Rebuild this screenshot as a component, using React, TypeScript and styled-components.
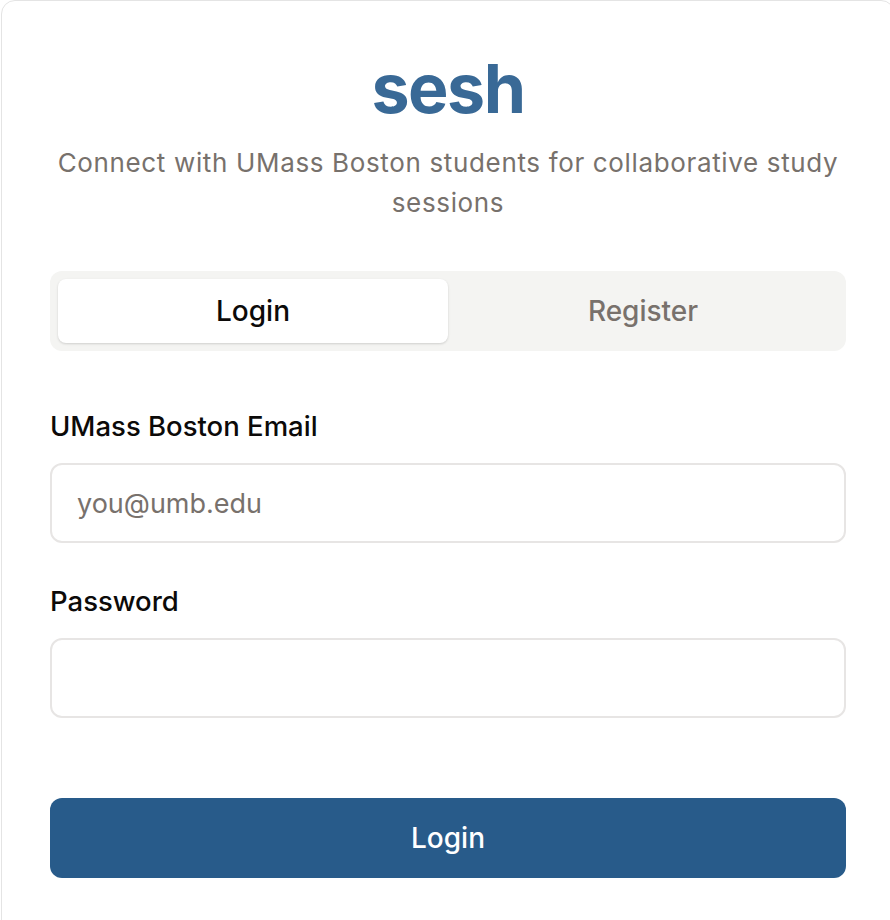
import React from "react";
import styled, { createGlobalStyle } from "styled-components";

const Global = createGlobalStyle`
  html, body { margin: 0; padding: 0; background: #ffffff; overflow: hidden; }
  body { font-family: Inter, "Noto Sans", sans-serif; }
  * { box-sizing: border-box; }
`;

const Page = styled.div`
  width: 890px;
  height: 920px;
  overflow: hidden;
  padding-left: 1px;
`;

const Card = styled.div`
  width: 894px;
  min-height: 940px;
  border: 1px solid #e4e4e4;
  border-radius: 14px;
  background: #fff;
  padding: 51px 48px 40px 48px;
  display: flex;
  flex-direction: column;
`;

const Brand = styled.h1`
  margin: 0;
  text-align: center;
  font-size: 68px;
  line-height: 72px;
  font-weight: 700;
  letter-spacing: -1.5px;
  color: #396996;
`;

const Tagline = styled.p`
  margin: 19px auto 0 auto;
  max-width: 790px;
  text-align: center;
  font-size: 26px;
  line-height: 40px;
  letter-spacing: 0.65px;
  color: #77716c;
`;

const Tabs = styled.div`
  margin-top: 48px;
  height: 80px;
  background: #f4f4f2;
  border-radius: 12px;
  padding: 8px;
  display: grid;
  grid-template-columns: 1fr 1fr;
`;

const Tab = styled.button<{ $active?: boolean }>`
  border: none;
  border-radius: 8px;
  font-family: inherit;
  font-size: 28px;
  font-weight: 500;
  color: ${(p) => (p.$active ? "#0c0a09" : "#78716c")};
  background: ${(p) => (p.$active ? "#ffffff" : "transparent")};
  box-shadow: ${(p) => (p.$active ? "0 1px 3px rgba(0,0,0,0.1), 0 1px 2px rgba(0,0,0,0.06)" : "none")};
`;

const Form = styled.form`
  margin-top: 58px;
  display: flex;
  flex-direction: column;
`;

const Field = styled.div`
  display: flex;
  flex-direction: column;
  gap: 20px;
  margin-bottom: 41px;
`;

const Label = styled.label`
  font-size: 27.5px;
  line-height: 34px;
  font-weight: 500;
  color: #0c0a09;
`;

const Input = styled.input`
  height: 80px;
  flex: 0 0 80px;
  border: 2px solid #e7e5e4;
  border-radius: 12px;
  padding: 0 25px;
  font-family: inherit;
  font-size: 27px;
  color: #0c0a09;
  outline: none;
  &::placeholder { color: #78716c; }
`;

const Submit = styled.button`
  margin-top: 39px;
  height: 80px;
  border: none;
  border-radius: 12px;
  background: #285b8a;
  color: #fff;
  font-family: inherit;
  font-size: 28px;
  font-weight: 500;
`;

export default function App() {
  return (
    <Page>
      <Global />
      <Card>
        <Brand>sesh</Brand>
        <Tagline>Connect with UMass Boston students for collaborative study sessions</Tagline>
        <Tabs>
          <Tab $active type="button">Login</Tab>
          <Tab type="button">Register</Tab>
        </Tabs>
        <Form onSubmit={(e) => e.preventDefault()}>
          <Field>
            <Label>UMass Boston Email</Label>
            <Input type="email" placeholder="you@umb.edu" />
          </Field>
          <Field>
            <Label>Password</Label>
            <Input type="password" />
          </Field>
          <Submit type="submit">Login</Submit>
        </Form>
      </Card>
    </Page>
  );
}
